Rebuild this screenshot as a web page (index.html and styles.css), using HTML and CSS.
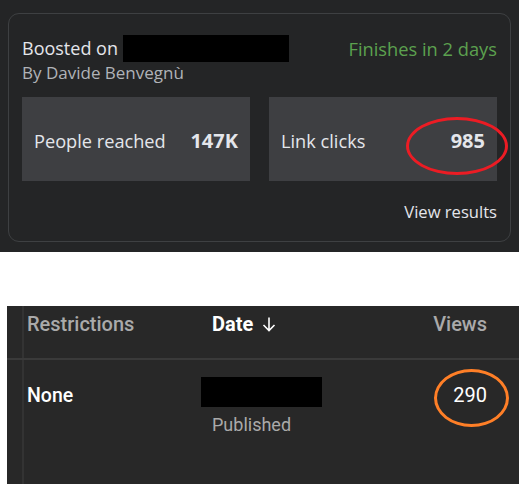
FILE: index.html
```html
<!DOCTYPE html>
<html>
<head>
<meta charset="utf-8">
<link rel="stylesheet" href="styles.css">
</head>
<body>
<section class="fb">
  <div class="card">
    <div class="head">
      <div class="title">
        <div class="boosted">Boosted on <span class="redact-top"></span></div>
        <div class="by">By Davide Benvegnù</div>
      </div>
      <div class="finish">Finishes in 2 days</div>
    </div>
    <div class="stats">
      <div class="stat"><span class="label">People reached</span><span class="value">147K</span></div>
      <div class="stat"><span class="label">Link clicks</span><span class="value">985</span><span class="ring ring-red"></span></div>
    </div>
    <div class="foot"><span class="results">View results</span></div>
  </div>
</section>

<section class="yt">
  <div class="row header">
    <div class="c1 hgray">Restrictions</div>
    <div class="c2 hwhite">Date <svg class="arrow" width="14" height="16" viewBox="0 0 14 16"><path d="M7 1.5V14.5M1.5 9L7 14.5L12.5 9" fill="none" stroke="#fff" stroke-width="1.6"/></svg></div>
    <div class="c3 hgray">Views</div>
  </div>
  <div class="row body">
    <div class="c1 none">None</div>
    <div class="c2">
      <div class="redact-bot"></div>
      <div class="pub">Published</div>
    </div>
    <div class="c3 views">290<span class="ring ring-orange"></span></div>
  </div>
</section>
</body>
</html>
```

FILE: styles.css
```css
html, body {
  margin: 0;
  padding: 0;
  background: #ffffff;
}

.fb {
  width: 519px;
  height: 252px;
  box-sizing: border-box;
  background: #242526;
  padding: 13px 8px 10px 8px;
  font-family: "Open Sans", "Noto Sans", sans-serif;
}

.card {
  height: 229px;
  box-sizing: border-box;
  border: 1px solid #3e4042;
  border-radius: 11px;
  padding: 0 13px;
  display: flex;
  flex-direction: column;
}

.head {
  display: flex;
  justify-content: space-between;
  align-items: flex-start;
  padding-top: 21px;
}

.boosted {
  display: flex;
  align-items: center;
  font-size: 18px;
  color: #e4e6eb;
  height: 27px;
  line-height: 27px;
}

.redact-top {
  display: inline-block;
  width: 166px;
  height: 27px;
  background: #000;
  margin-left: 5px;
}

.by {
  font-size: 17px;
  color: #b0b3b8;
  line-height: 22px;
}

.finish {
  font-size: 18.3px;
  color: #5ca14f;
  line-height: 27px;
  height: 27px;
}

.stats {
  display: flex;
  gap: 19px;
  margin-top: 13px;
}

.stat {
  position: relative;
  width: 228px;
  height: 84px;
  background: #3e3f42;
  display: flex;
  align-items: center;
  justify-content: space-between;
  padding: 3px 12px 0 12px;
  box-sizing: border-box;
}

.label {
  font-size: 18.2px;
  color: #e4e6eb;
}

.value {
  font-size: 20px;
  font-weight: 700;
  color: #e4e6eb;
}

.ring {
  position: absolute;
  border-radius: 50%;
  box-sizing: border-box;
  pointer-events: none;
}

.ring-red {
  left: 137px;
  top: 20px;
  width: 102px;
  height: 58px;
  border: 3px solid #ec1c24;
}

.foot {
  display: flex;
  justify-content: flex-end;
  margin-top: 19px;
}

.results {
  font-size: 16.6px;
  color: #e4e6eb;
}

.yt {
  margin: 54px 0 0 7px;
  width: 512px;
  height: 178px;
  background:
    linear-gradient(to right, transparent 15px, #333333 15px, #333333 17px, transparent 17px),
    #282828;
  display: flex;
  flex-direction: column;
  font-family: Roboto, "Noto Sans", sans-serif;
}

.row {
  display: flex;
  padding-left: 20px;
}

.header {
  height: 54px;
  border-bottom: 2px solid #3a3a3a;
  align-items: center;
  padding-bottom: 17px;
  box-sizing: border-box;
}

.c1 {
  width: 185px;
  flex: none;
}

.c2 {
  flex: 1;
}

.c3 {
  width: 120px;
  text-align: right;
  padding-right: 32px;
  flex: none;
  box-sizing: border-box;
  position: relative;
}

.hgray {
  font-size: 20px;
  font-weight: 500;
  color: #aaaaaa;
}

.hwhite {
  font-size: 20px;
  font-weight: 700;
  color: #ffffff;
  display: flex;
  align-items: center;
  gap: 9px;
}

.body {
  padding-top: 17px;
}

.none {
  font-size: 19.5px;
  font-weight: 500;
  color: #ffffff;
  margin-top: 7px;
}

.redact-bot {
  width: 121px;
  height: 30px;
  background: #000;
  margin-left: -11px;
}

.pub {
  font-size: 18px;
  color: #aaaaaa;
  margin-top: 7px;
}

.views {
  font-size: 20px;
  font-weight: 400;
  color: #ffffff;
  margin-top: 6px;
}

.ring-orange {
  left: 35px;
  top: -14px;
  width: 75px;
  height: 58px;
  border: 3px solid #ff7f27;
}
```
